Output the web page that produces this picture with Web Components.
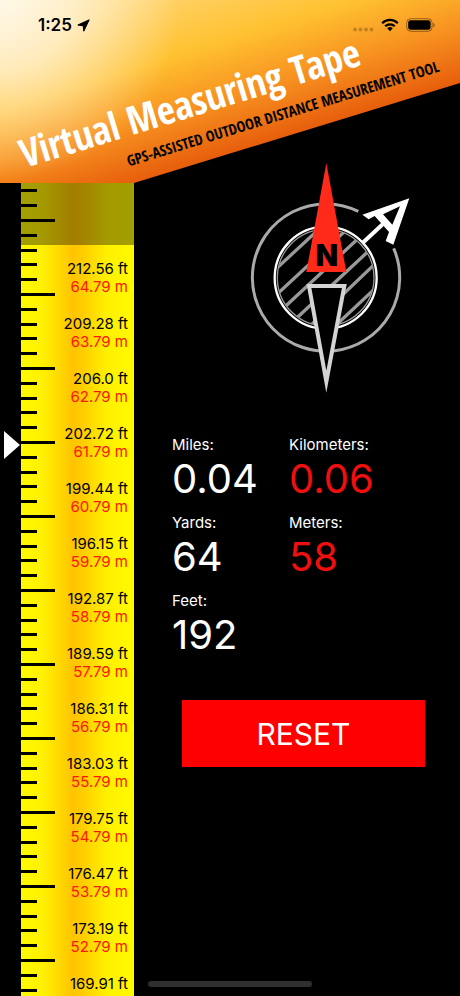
<!DOCTYPE html>
<html lang="en">
<head>
<meta charset="utf-8">
<meta name="viewport" content="width=device-width, initial-scale=1">
<title>Virtual Measuring Tape</title>
<style>
body { margin: 0; background: #000; color: #fff; font-family: Inter, "Liberation Sans", sans-serif; }
</style>
</head>
<body>
<measuring-app></measuring-app>
<script>
const define = (name, html, setup) => customElements.define(name, class extends HTMLElement {
  connectedCallback() {
    if (this.shadowRoot) return;
    const root = this.attachShadow({ mode: 'open' });
    const t = document.createElement('template');
    t.innerHTML = html;
    root.append(t.content.cloneNode(true));
    if (setup) setup(this, root);
  }
});

define('status-bar', `
<style>
:host { display: flex; justify-content: space-between; align-items: center; padding: 15px 25px 0 38px; color: #000; font-size: 17px; line-height: 20px; font-weight: 600; }
div { display: flex; align-items: center; gap: 5px; }
.icons { gap: 7px; }
svg { display: block; }
</style>
<div><span>1:25</span>
<svg width="13" height="13" viewBox="0 0 13 13" aria-hidden="true"><path d="M12.2.8 6.8 12.2 6.2 6.8.8 6z" fill="#000" stroke="#000" stroke-width="1" stroke-linejoin="round"/></svg></div>
<div class="icons">
<svg width="21" height="20" viewBox="0 0 21 20" aria-hidden="true"><g fill="#000" opacity=".22"><circle cx="2" cy="14.5" r="1.9"/><circle cx="7.5" cy="14.5" r="1.9"/><circle cx="13" cy="14.5" r="1.9"/><circle cx="18.5" cy="14.5" r="1.9"/></g></svg>
<svg width="18" height="14" viewBox="0 0 18 14" aria-hidden="true"><g fill="none" stroke="#000" stroke-width="2.3"><path d="M1.2 5.2a11 11 0 0 1 15.6 0"/><path d="M4.2 8.3a6.8 6.8 0 0 1 9.6 0"/></g><path d="M6.2 10.3a4 4 0 0 1 5.6 0L9 13.3z" fill="#000"/></svg>
<svg width="29" height="14" viewBox="0 0 29 14" aria-hidden="true"><rect x=".7" y=".7" width="25.4" height="12.6" rx="4" fill="none" stroke="#000" stroke-opacity=".4"/><rect x="2.2" y="2.2" width="22.4" height="9.6" rx="2.4"/><path d="M27.3 4.7c1.8.8 1.8 3.8 0 4.6z" opacity=".45"/></svg>
</div>`);

define('app-banner', `
<style>
:host { display: block; position: relative; height: 183px; }
.sky { height: 100%; clip-path: polygon(0 0, 100% 0, 100% 83px, 134px 100%, 0 100%);
  background: radial-gradient(circle at 0 0, #fffc 0, #fff9 70px, #fff0 180px), linear-gradient(163deg, #ffdf90 0, #ffc130 105px, #f79120 160px, #e75e0c 214px); }
.title { position: absolute; left: 25px; top: 169px; transform: rotate(-17deg); transform-origin: 0 0; white-space: nowrap; }
hgroup { position: absolute; left: 0; bottom: -32px; }
h1, p { margin: 0; font-family: "Open Sans Condensed", "Roboto Condensed", "Liberation Sans", sans-serif; font-weight: 700; }
h1 { font-size: 39px; line-height: 44px; color: #fff; }
p { font-size: 15px; line-height: 20px; color: #000; padding: 6px 0 0 100px; }
</style>
<div class="sky"><slot></slot></div>
<div class="title"><hgroup><h1>Virtual Measuring Tape</h1><p>GPS-ASSISTED OUTDOOR DISTANCE MEASUREMENT TOOL</p></hgroup></div>`);

define('tape-mark', `
<style>
:host { display: block; padding-bottom: 19px; font-size: 15px; line-height: 18px; text-align: right; color: #000; }
div + div { color: #ff1500; }
</style>
<div><slot name="ft"></slot></div><div><slot name="m"></slot></div>`);

define('tape-ruler', `
<style>
:host { display: grid; grid-template-columns: 21px 113px; overflow: hidden; min-height: 0; }
.gutter { padding: 248px 0 0 4px; }
.gutter svg { display: block; }
.tape { position: relative; overflow: hidden; display: grid; grid-template-columns: 34px 1fr;
  background: linear-gradient(90deg, #fffa00 0, #fff000 20%, #ffc400 46%, #ffcc00 54%, #fff000 76%, #fffa00 100%); }
.ticks { display: block; width: 34px; height: 100%; }
.marks { padding: 77px 6px 0 0; white-space: nowrap; min-height: 0; }
.shade { position: absolute; inset: 0 0 auto 0; height: 62px; background: #0000005c; }
</style>
<div class="gutter"><svg width="16" height="28" viewBox="0 0 16 28" aria-hidden="true"><path d="M0 0 16 14 0 28z" fill="#fff"/></svg></div>
<div class="tape">
<svg class="ticks" aria-hidden="true"><defs><pattern id="t" y="36" width="34" height="74" patternUnits="userSpaceOnUse">
<path d="M0 0H34V3H0zM0 15H16V18H0zM0 30H16V33H0zM0 44H16V47H0zM0 59H16V62H0z"/></pattern></defs><rect width="34" height="100%" fill="url(#t)"/></svg>
<div class="marks"></div>
<div class="shade"></div>
</div>`, (el, root) => {
  const feet = ['212.56','209.28','206.0','202.72','199.44','196.15','192.87','189.59','186.31','183.03','179.75','176.47','173.19','169.91'];
  root.querySelector('.marks').innerHTML = feet.map((f, i) =>
    `<tape-mark><span slot="ft">${f} ft</span><span slot="m">${64 - i}.79 m</span></tape-mark>`).join('');
});

define('compass-dial', `
<style>
:host { display: block; }
svg { display: block; }
text { font: 900 88px Inter, "Liberation Sans", sans-serif; }
</style>
<svg width="180" height="245" viewBox="0 0 540 735" role="img" aria-label="Compass">
<defs><clipPath id="c"><circle cx="257" cy="368" r="144"/></clipPath></defs>
<path d="M355 169A221 221 0 1 0 461 280" fill="none" stroke="#aaa" stroke-width="9"/>
<g clip-path="url(#c)" stroke="#999" stroke-width="10"><path d="M98 351 248 212M98 430 340 205M118 471 370 236M150 508 405 270M200 523 425 307M280 518 430 377"/></g>
<circle cx="257" cy="368" r="145" fill="none" stroke="#999" stroke-width="4"/>
<circle cx="257" cy="368" r="153" fill="none" stroke="#fff" stroke-width="7"/>
<path d="M370 262 428 208" stroke="#fff" stroke-width="12"/>
<path fill="#fff" fill-rule="evenodd" d="M508 130 460 269 437 258 447 231 404 183 386 193 367 179zM480 154 429 178 457 209z"/>
<path d="M259 24 319 351H199z" fill="#ff2a1a"/>
<text x="260" y="332" text-anchor="middle" fill="#000">N</text>
<path d="M207 393H313L259 680z" fill="#000" stroke="#d4d4d4" stroke-width="12" stroke-miterlimit="20"/>
</svg>`);

define('distance-reading', `
<style>
:host { display: block; color: #fff; }
.label { font-size: 15px; line-height: 20px; color: #fff; }
output { display: block; font-size: 40px; line-height: 48px; padding-bottom: 10px; }
:host([metric]) output { color: #f00f0f; }
</style>
<div class="label" id="l"></div><output aria-labelledby="l"><slot></slot></output>`, (el, root) => {
  root.querySelector('.label').textContent = el.getAttribute('label') + ':';
});

define('reset-button', `
<style>
:host { display: block; }
button { display: block; width: 100%; height: 67px; border: 0; border-radius: 0; background: #f00; color: #fff; font: 30px Inter, "Liberation Sans", sans-serif; cursor: pointer; }
</style>
<button type="button"><slot></slot></button>`);

define('measuring-app', `
<style>
:host { display: grid; grid-template-rows: auto 1fr; height: 100vh; overflow: hidden; position: relative; }
.body { display: grid; grid-template-columns: auto 1fr; min-height: 0; }
main { display: flex; flex-direction: column; min-width: 0; }
compass-dial { align-self: center; margin-top: -28px; padding-left: 66px; z-index: 1; }
.readings { display: grid; grid-template-columns: 117px 1fr; padding: 35px 0 0 38px; }
reset-button { margin: 31px 35px 0 48px; }
.home { position: absolute; left: 50%; bottom: 9px; width: 164px; height: 6px; margin-left: -82px; border-radius: 3px; background: #2e2e2e; }
</style>
<app-banner><status-bar></status-bar></app-banner>
<div class="body">
<tape-ruler></tape-ruler>
<main>
<compass-dial></compass-dial>
<section class="readings">
<distance-reading label="Miles">0.04</distance-reading>
<distance-reading label="Kilometers" metric>0.06</distance-reading>
<distance-reading label="Yards">64</distance-reading>
<distance-reading label="Meters" metric>58</distance-reading>
<distance-reading label="Feet">192</distance-reading>
</section>
<reset-button>RESET</reset-button>
</main>
</div>
<div class="home"></div>`);
</script>
</body>
</html>
